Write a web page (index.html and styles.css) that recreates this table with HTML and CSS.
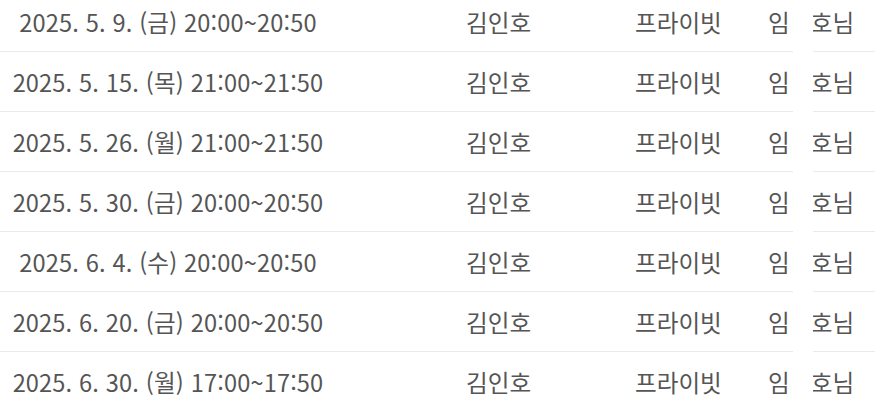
FILE: index.html
```html
<!DOCTYPE html>
<html lang="ko">
<head>
<meta charset="utf-8">
<link rel="stylesheet" href="styles.css">
</head>
<body>
<div class="list">
  <div class="row"><div class="date">2025. 5. 9. (금) 20:00~20:50</div><div class="coach">김인호</div><div class="type">프라이빗</div><div class="member">임<span class="hid">영</span>호님<span class="mask"></span></div></div>
  <div class="row"><div class="date">2025. 5. 15. (목) 21:00~21:50</div><div class="coach">김인호</div><div class="type">프라이빗</div><div class="member">임<span class="hid">영</span>호님<span class="mask"></span></div></div>
  <div class="row"><div class="date">2025. 5. 26. (월) 21:00~21:50</div><div class="coach">김인호</div><div class="type">프라이빗</div><div class="member">임<span class="hid">영</span>호님<span class="mask"></span></div></div>
  <div class="row"><div class="date">2025. 5. 30. (금) 20:00~20:50</div><div class="coach">김인호</div><div class="type">프라이빗</div><div class="member">임<span class="hid">영</span>호님<span class="mask"></span></div></div>
  <div class="row"><div class="date">2025. 6. 4. (수) 20:00~20:50</div><div class="coach">김인호</div><div class="type">프라이빗</div><div class="member">임<span class="hid">영</span>호님<span class="mask"></span></div></div>
  <div class="row"><div class="date">2025. 6. 20. (금) 20:00~20:50</div><div class="coach">김인호</div><div class="type">프라이빗</div><div class="member">임<span class="hid">영</span>호님<span class="mask"></span></div></div>
  <div class="row"><div class="date">2025. 6. 30. (월) 17:00~17:50</div><div class="coach">김인호</div><div class="type">프라이빗</div><div class="member">임<span class="hid">영</span>호님<span class="mask"></span></div></div>
</div>
</body>
</html>
```
FILE: styles.css
```css
html, body {
  margin: 0;
  padding: 0;
  background: #ffffff;
  overflow: hidden;
}
.list {
  margin-top: -8px;
  font-family: "Noto Sans CJK KR", "Noto Sans", sans-serif;
  font-size: 23.6px;
  color: #555555;
}
.row {
  position: relative;
  display: grid;
  grid-template-columns: 336px 299px 133px 1fr;
  align-items: center;
  height: 59px;
  border-bottom: 1px solid #e6eaf1;
  white-space: nowrap;
}
.date {
  text-align: center;
  letter-spacing: 0.15px;
}
.coach {
  padding-left: 130px;
}
.hid {
  display: inline-block;
  box-sizing: border-box;
  width: 21px;
  padding-left: 2px;
  overflow: hidden;
  vertical-align: top;
}
.mask {
  position: absolute;
  top: 0;
  bottom: -1px;
  left: 793px;
  width: 20px;
  background: #ffffff;
}
```
